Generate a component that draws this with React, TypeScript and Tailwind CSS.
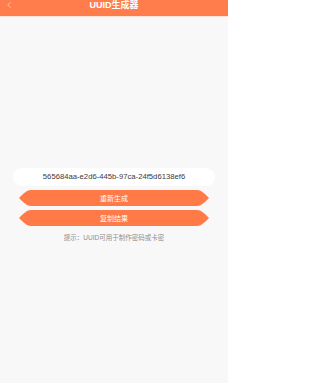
import { ChevronLeft } from 'lucide-react';

const uuid = '565684aa-e2d6-445b-97ca-24f5d6138ef6';

// leaf-shaped pill: pointed ends with curved edges
const leaf =
  '[clip-path:polygon(0_50%,2px_37%,4px_25%,6px_15%,8px_7%,10px_2%,12px_0,calc(100%-12px)_0,calc(100%-10px)_2%,calc(100%-8px)_7%,calc(100%-6px)_15%,calc(100%-4px)_25%,calc(100%-2px)_37%,100%_50%,calc(100%-2px)_63%,calc(100%-4px)_75%,calc(100%-6px)_85%,calc(100%-8px)_93%,calc(100%-10px)_98%,calc(100%-12px)_100%,12px_100%,10px_98%,8px_93%,6px_85%,4px_75%,2px_63%)]';

function ShapeButton({ label }: { label: string }) {
  return (
    <button
      className={`mx-[19px] flex h-[16px] items-center justify-center bg-[#ff7a47] text-[7px] leading-none text-white ${leaf}`}
    >
      {label}
    </button>
  );
}

export default function App() {
  return (
    <div className="min-h-[383px] w-[228px] bg-[#f8f8f9] [font-family:'Liberation_Sans','Noto_Sans_CJK_SC',sans-serif]">
      {/* Header */}
      <div className="relative flex h-[17px] items-start justify-center border-b border-[#fde3d8] bg-[#ff7d4c]">
        <ChevronLeft className="absolute left-[4px] top-[0px] h-[10px] w-[10px] text-[#ffd2bf]" strokeWidth={2} />
        <span className="text-[9px] font-bold leading-[10px] text-white">UUID生成器</span>
      </div>

      <div className="flex flex-col pt-[151px]">
        <div className="mx-[13px] flex h-[18px] items-center justify-center rounded-full bg-white text-[7.7px] text-[#3a3a3a]">
          {uuid}
        </div>

        <div className="mt-[4px] flex flex-col gap-[4px]">
          <ShapeButton label="重新生成" />
          <ShapeButton label="复制结果" />
        </div>

        <p className="mt-[7px] text-center text-[6.5px] leading-[10px] text-[#8d8d8d]">
          提示：UUID可用于制作密码或卡密
        </p>
      </div>
    </div>
  );
}
